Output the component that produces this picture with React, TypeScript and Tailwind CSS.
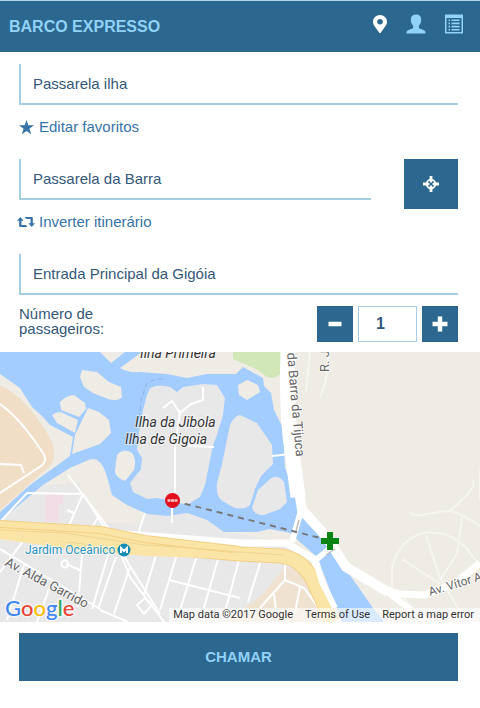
import { useState } from "react";
import type { ReactNode } from "react";
import { FaMapMarkerAlt } from "react-icons/fa";

function UserIcon() {
  return (
    <svg viewBox="0 0 20 20" className="w-5 h-5 fill-current" aria-hidden="true">
      <path d="M10 .5c-3.500 0-5.200 2-5.200 5.200 0 2.400.8 4.600 2.400 6v1.600c0 .6-.3 1-.9 1.200L2 16.200C1 16.700.4 17.600.4 19.500h19.200c0-1.900-.6-2.800-1.600-3.300l-4.300-1.700c-.6-.2-.9-.6-.9-1.200v-1.600c1.600-1.400 2.400-3.600 2.400-6 0-3.200-1.700-5.200-5.200-5.200z" />
    </svg>
  );
}

function ListIcon() {
  return (
    <svg viewBox="0 0 18 19" className="w-[18px] h-5" aria-hidden="true">
      <path
        fill="currentColor"
        fillRule="evenodd"
        d="M0 0h18v19H0zM1.500 3.500v14h15v-14z"
      />
      <path
        stroke="currentColor"
        strokeWidth="1.600"
        d="M3.500 5.700h1.500M6.500 5.700h8M3.500 8.900h1.500M6.500 8.900h8M3.500 12.100h1.500M6.500 12.100h8M3.500 15.300h1.500M6.500 15.300h8"
      />
    </svg>
  );
}

function StarIcon() {
  return (
    <svg viewBox="0 0 14 14" className="w-[15px] h-[15px] fill-current" aria-hidden="true">
      <path d="M7 0l1.700 5H14L9.700 8.100l1.700 5.300L7 10.200l-4.400 3.200 1.700-5.300L0 5h5.300z" />
    </svg>
  );
}

function RetweetIcon() {
  return (
    <svg viewBox="0 0 19 12" className="w-[19px] h-3 fill-current" aria-hidden="true">
      <path d="M3.500.8L7 4.800H4.700v4.400h4.600l1.700 2H3.300c-.6 0-1-.4-1-1V4.800H0z" />
      <path d="M15.500 11.200L12 7.200h2.300V2.800H9.700L8 .8h7.700c.6 0 1 .4 1 1v5.400H19z" />
    </svg>
  );
}

function TargetIcon() {
  return (
    <svg viewBox="0 0 16 16" className="w-4 h-4" aria-hidden="true">
      <circle cx="8" cy="8" r="4.300" fill="none" stroke="currentColor" strokeWidth="1.800" />
      <path
        fill="currentColor"
        d="M6.600 0h2.800v5.500L8 7 6.600 5.500zM6.600 16h2.800v-5.500L8 9l-1.400 1.500zM0 6.600v2.800h5.500L7 8 5.500 6.600zM16 6.600v2.800h-5.500L9 8l1.500-1.400z"
      />
    </svg>
  );
}

function PlusIcon() {
  return (
    <svg viewBox="0 0 16 16" className="w-4 h-4 fill-current" aria-hidden="true">
      <path d="M5.800.5h4.400v5.300h5.300v4.400h-5.300v5.300H5.800v-5.300H.5V5.800h5.300z" />
    </svg>
  );
}

function MinusIcon() {
  return (
    <svg viewBox="0 0 16 16" className="w-4 h-4 fill-current" aria-hidden="true">
      <rect x="1.500" y="5.800" width="13" height="4.400" rx=".5" />
    </svg>
  );
}

function Header() {
  return (
    <header className="flex h-[52px] items-center justify-between border-t border-[#b5d5ea] bg-[#2b678e] pl-[9px] pr-[17px] text-[#91d2f7]">
      <h1 className="text-base font-bold">BARCO EXPRESSO</h1>
      <nav className="flex items-center gap-[19px] pb-1.5">
        <button type="button" aria-label="Mapa" className="text-white">
          <FaMapMarkerAlt className="w-3.5 h-[18px]" preserveAspectRatio="none" />
        </button>
        <button type="button" aria-label="Perfil">
          <UserIcon />
        </button>
        <button type="button" aria-label="Lista">
          <ListIcon />
        </button>
      </nav>
    </header>
  );
}

type FieldProps = {
  label: string;
  initial: string;
};

function Field({ label, initial }: FieldProps) {
  const [value, setValue] = useState(initial);
  return (
    <input
      type="text"
      aria-label={label}
      value={value}
      onChange={(e) => setValue(e.target.value)}
      className="h-[41px] w-full min-w-0 flex-1 border-b-2 border-l-2 border-[#a3cfdf] pl-3 text-[15px] outline-none"
    />
  );
}

function FieldLink({ icon, children }: { icon: ReactNode; children: ReactNode }) {
  return (
    <a href="#" className="mt-2.5 mb-5 flex h-6 items-center text-[#3773a8]">
      <span className="-ml-0.5 flex w-[22px] pr-1 justify-center">{icon}</span>
      {children}
    </a>
  );
}

function Passengers() {
  const [count, setCount] = useState(1);
  return (
    <div className="mt-[11px] mb-2.5 flex items-center justify-between">
      <label htmlFor="passengers" className="w-28 leading-[15px] mb-1.5">
        Número de passageiros:
      </label>
      <div className="flex h-9 gap-[5px]">
        <button
          type="button"
          aria-label="Menos"
          onClick={() => setCount((prev) => Math.max(1, prev - 1))}
          className="flex w-9 items-center justify-center bg-[#2b678e] text-white"
        >
          <MinusIcon />
        </button>
        <input
          id="passengers"
          type="text"
          value={count}
          onChange={(e) => setCount(Number(e.target.value) || 1)}
          className="w-[59px] border border-[#a9cbe2] pr-3.5 text-center text-base font-bold outline-none"
        />
        <button
          type="button"
          aria-label="Mais"
          onClick={() => setCount((prev) => prev + 1)}
          className="flex w-9 items-center justify-center bg-[#2b678e] text-white"
        >
          <PlusIcon />
        </button>
      </div>
    </div>
  );
}

function MapDrawing() {
  return (
    <svg
      viewBox="0 0 480 270"
      preserveAspectRatio="xMidYMid slice"
      className="block h-full w-full font-['Roboto',sans-serif]"
      role="img"
      aria-label="Mapa"
    >
      <rect width="480" height="270" fill="#efece5" />

      {/* city blocks */}
      <path fill="#e8e8e8" d="M0 166L43 134 75 116 97 104 108 130 113 144 146 161 187 162 207 169 225 180 290 190 308 205 325 260V270H0z" />
      <path fill="#efece5" d="M43 134L72 116 97 105 104 115 110 137 127 153 146 161 142 172 100 170 78 130z" />
      <path fill="#f3e0c8" d="M225 270L260 245 285 215 312 220 324 250 327 270z" opacity=".7" />
      <path fill="#f0dfc6" d="M0 33C24 45 40 68 51 88Q58 104 50 114L0 158z" />
      <path fill="#f2dde6" d="M46 142h17v10h-4v18H45v-14z" />
      <path fill="#d1e7b7" d="M233 0h50l-3 22q-6 6-13 3l-11-8-23-10z" />

      {/* water */}
      <path
        fill="#a3ccff"
        d="M0 0H100L111 11 125 0H142L120 16Q128 21 140 20L167 22 187 26 207 22 236 22 243 15 252 20 263 26 264 34 271 41 274 58 283 76 285 116 292 133 296 148 307 166 322 178 334 192 345 216 373 256 384 270H342L323 220 318 206 300 190 290 181 270 177 257 180H224L207 168 187 161 167 164 147 162 127 153 112 143 108 128Q104 112 97 108 92 105 84 110L70 116 43 133 0 169V160L30 133 70 104 73 85 50 73 43 65 32 55 20 36 0 22z"
      />
      <path fill="#e8e8e8" d="M150 36Q158 32 170 35L177 40 183 35 203 32 217 33 225 46 223 63 217 83 213 93 205 133 200 145 187 153 173 149 157 146 147 147 133 140 130 131 141 117 142 106 137 98 139 80 143 58 147 43z" />
      <path fill="#e8e8e8" d="M240 63L257 71 272 93 273 112 261 124 255 137 250 153Q240 161 226 151 215 147 217 131L222 112 230 73Q234 64 240 63z" />
      <path fill="#e8e8e8" d="M268 129Q276 120 284 130L287 150 280 157 264 163Q254 163 252 156L258 138z" />
      <g fill="#efece5">
        <path d="M82 18L97 20 109 30 121 35 122 45Q118 50 108 47L93 41 84 35 80 25z" />
        <path d="M60 50Q67 43 74 43L85 51 86 57 79 65 61 58z" />
        <path d="M52 63Q59 58 63 61L78 68 75 81 57 71z" />
        <path d="M88 56L99 60 109 68 111 81 100 92 72 102 75 83z" />
        <path d="M117 103Q124 95 132 101 137 107 134 118L125 129Q114 125 115 118z" />
        <path d="M238 33L247 28 258 33 260 40 247 48 239 43z" />
        <path d="M144 163L167 166 187 163 205 171 219 180 140 176z" fill="#e8e8e8" />
      </g>
      <path fill="none" stroke="#86b7e8" strokeDasharray="5 3" d="M163 27Q150 27 146 33L141 49 139 67" />

      {/* small streets */}
      <g fill="none" stroke="#fff" strokeWidth="2">
        <path d="M0 52Q20 66 43 101 49 110 38 116L0 141M0 112l21 1 3 8" />
        <path d="M163 56l9-7 8 12 11-9 12-4V35M180 61l-5 30v57M188 94l26 1M172 150v21" />
        <path d="M68 123L91 153 112 181 128 211 160 262M0 170L27 141 83 142 104 175M83 142L67 178M74 161l-7-3M98 166l-6 9M145 161l-7 21" />
        <path d="M0 197L100 257M0 220L24 188M24 213l-17 55M50 234l-13 36M83 190L78 255M66 212l14 6M108 203L92 257M116 205L98 257M130 215L114 262M157 200L144 243M177 202L160 258M197 203L178 265M219 204L202 262M240 204L225 260M169 228L240 246M261 208L248 250M120 200L130 225 164 270" />
        <path d="M0 186L110 200M100 258L128 270M137 253l8-7 7 7-8 9zM260 256L285 228 304 236 327 267M285 228V205M274 242l3 24M300 235l-5 25" />
        <circle cx="65" cy="212" r="3.500" />
      </g>

      {/* hill roads */}
      <g fill="none" stroke="#f7f5f1" strokeWidth="2">
        <path d="M310 0Q309 12 306 40M328 0Q329 26 320 45M410 160Q411 165 427 162T450 159 480 174M450 159L467 143Q476 132 473 128M480 118v30" />
        <path d="M392 240V216Q398 190 420 182 446 176 466 196L480 214" />
        <path d="M426 183L440 226 458 256M402 207L440 232M462 165L457 202 440 228M398 239L424 270" />
      </g>

      {/* main roads */}
      <g fill="none" strokeLinejoin="round">
        <path stroke="#fff" strokeWidth="7" d="M112 181L165 185 242 191 286 191 314 207 336 270" />
        <path stroke="#f2cf82" strokeWidth="15" d="M0 179L75 184 145 194 240 202 280 204Q301 206 313 228L332 270" />
        <path stroke="#fbe5a6" strokeWidth="13" d="M0 179L75 184 145 194 240 202 280 204Q301 206 313 228L332 270" />
        <path stroke="#f2cf82" strokeWidth="8" d="M0 172L50 175 100 178 145 187 240 198" />
        <path stroke="#fbe5a6" strokeWidth="6" d="M0 172L50 175 100 178 145 187 240 198M0 184L70 194 145 201 240 204" />
        <path stroke="#f0d490" strokeWidth="1" d="M0 178L65 181 145 193 190 196 240 200 285 203" />
        <path stroke="#fff" strokeWidth="15" d="M288 0Q286 60 292 99L298 145" />
        <path stroke="#fff" strokeWidth="10" d="M298 132L302 158 326 184 346 215 388 240" />
        <path stroke="#fff" strokeWidth="7" d="M380 236L400 242 425 243 455 231 480 211" />
        <path stroke="#fff" strokeWidth="6" d="M302 155L292 190M317 207L333 194M315 207L322 230 335 256M385 238L424 268" />
        <path stroke="#fff" strokeWidth="2" d="M272 104L290 102" />
        <path stroke="#bdbdbd" strokeWidth="1.500" d="M299 168l-3 11M326 203l9-6" />
      </g>

      {/* route */}
      <path stroke="#777" strokeWidth="2" strokeDasharray="6 5" d="M174 149L328 188" />
      <circle cx="172.500" cy="148.500" r="7.500" fill="#e3101d" />
      <path stroke="#f5c5c9" strokeWidth="2.500" strokeDasharray="3 .5" d="M167.500 148.500h10" />
      <path fill="#0a8414" d="M327 180h6v6h6v6h-6v6h-6v-6h-6v-6h6z" />

      {/* labels */}
      <g fontSize="14" fontStyle="italic" fill="#333" stroke="#fff" strokeWidth="2" strokeOpacity=".5" paintOrder="stroke">
        <text x="140" y="6">Ilha Primeira</text>
        <text x="135" y="75">Ilha da Jibola</text>
        <text x="125" y="92">Ilha de Gigoia</text>
      </g>
      <g fontSize="13" fill="#666" stroke="#fff" strokeWidth="2" strokeOpacity=".6" paintOrder="stroke">
        <text transform="translate(287 1) rotate(85)">da Barra da Tijuca</text>
        <text transform="translate(329 20) rotate(-90)">R. J</text>
        <text transform="translate(4 213) rotate(28)">Av. Alda Garrido</text>
        <text transform="translate(430 244) rotate(-17)" fontSize="12">Av. Vítor A</text>
      </g>
      <text x="25" y="202" fontSize="12" fill="#2995c0" stroke="#fff" strokeWidth="2" strokeOpacity=".6" paintOrder="stroke">
        Jardim Oceânico
      </text>
      <circle cx="124" cy="198" r="6.500" fill="#148cb4" />
      <path fill="none" stroke="#fff" strokeWidth="2" d="M121 201v-5l3 3 3-3v5" />
    </svg>
  );
}

function MapView() {
  return (
    <section className="relative h-[270px] overflow-hidden font-['Roboto',sans-serif]">
      <MapDrawing />
      <a
        href="#"
        className="absolute bottom-0 left-[5px] text-[22px] leading-7 font-medium font-['Lato',sans-serif] [-webkit-text-stroke:3px_rgba(255,255,255,0.6)] [paint-order:stroke]"
      >
        <span className="text-[#4285f4]">G</span>
        <span className="text-[#ea4335]">o</span>
        <span className="text-[#fbbc05]">o</span>
        <span className="text-[#4285f4]">g</span>
        <span className="text-[#34a853]">l</span>
        <span className="text-[#ea4335]">e</span>
      </a>
      <div className="absolute right-0 bottom-0 flex h-3.5 gap-3 bg-white/60 pr-1.5 pl-1 text-[11px] leading-[14px] whitespace-nowrap text-[#333]">
        <span>Map data ©2017 Google</span>
        <a href="#">Terms of Use</a>
        <a href="#">Report a map error</a>
      </div>
    </section>
  );
}

function App() {
  return (
    <div className="bg-white font-['Liberation_Sans',Arial,sans-serif] text-[15px] text-[#34587a]">
      <Header />
      <form onSubmit={(e) => e.preventDefault()}>
        <div className="flex flex-col pt-3 pr-[22px] pl-[19px]">
          <div className="flex">
            <Field label="Favorito" initial="Passarela ilha" />
          </div>
          <FieldLink icon={<StarIcon />}>Editar favoritos</FieldLink>
          <div className="flex h-[41px] gap-[33px]">
            <Field label="Origem" initial="Passarela da Barra" />
            <button
              type="button"
              aria-label="Minha localização"
              className="flex h-[50px] w-[54px] items-center justify-center bg-[#2b678e] text-white"
            >
              <TargetIcon />
            </button>
          </div>
          <FieldLink icon={<RetweetIcon />}>Inverter itinerário</FieldLink>
          <div className="flex">
            <Field label="Destino" initial="Entrada Principal da Gigóia" />
          </div>
          <Passengers />
        </div>
        <MapView />
        <div className="pt-[11px] pr-[22px] pb-[27px] pl-[19px]">
          <button
            type="submit"
            className="h-12 w-full bg-[#2b678e] text-[15px] font-bold text-[#91d2f7]"
          >
            CHAMAR
          </button>
        </div>
      </form>
    </div>
  );
}

export default App;
